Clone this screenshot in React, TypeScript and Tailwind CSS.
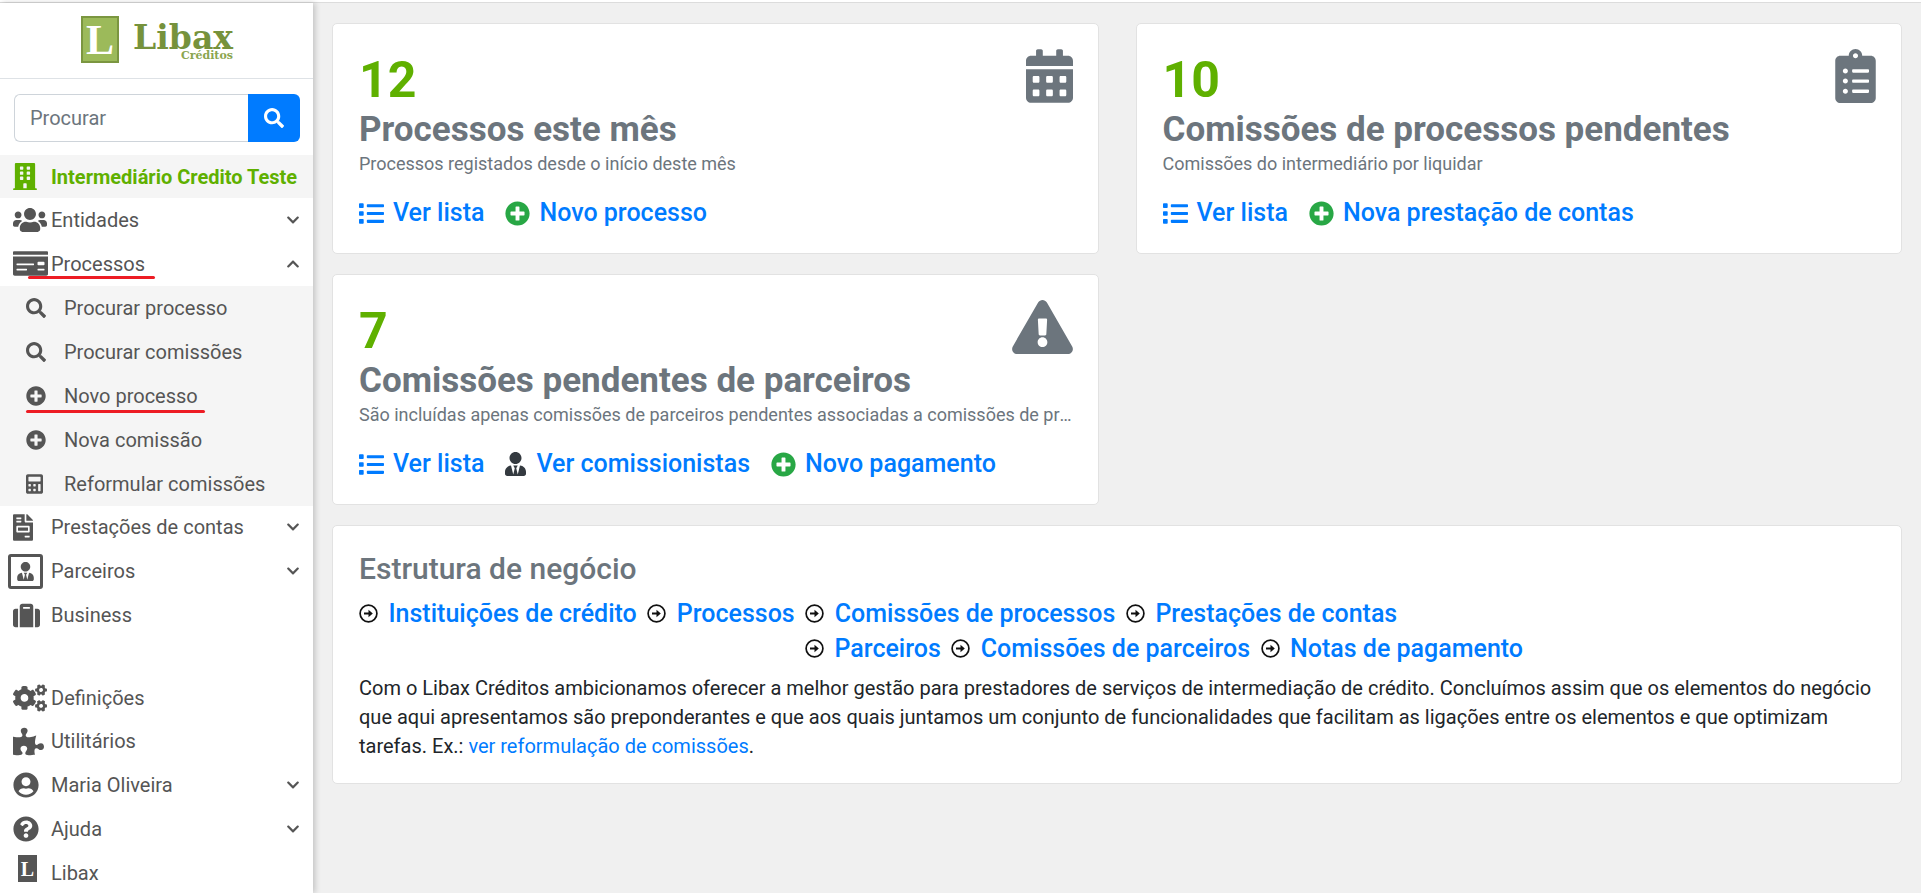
import React from "react";
import {
  FaBuilding, FaUsers, FaMoneyCheck, FaChevronDown, FaChevronUp, FaSearch, FaPlusCircle, FaCalculator,
  FaFileInvoice, FaUserTie, FaSuitcase, FaCogs, FaPuzzlePiece, FaUserCircle, FaQuestionCircle,
  FaCalendarAlt, FaClipboardList, FaExclamationTriangle, FaList,
} from "react-icons/fa";

function Row({ icon, label, chevron, up }: { icon: React.ReactNode; label: string; chevron?: boolean; up?: boolean }) {
  return (
    <div className="h-[43.8px] flex items-center pr-[13px] text-[#555] text-[20px] relative">
      <span className="w-[51px] shrink-0 flex items-center justify-start pl-[13px]">{icon}</span>
      <span className="flex-1">{label}</span>
      {chevron && (up ? <FaChevronUp className="text-[14px]" /> : <FaChevronDown className="text-[14px]" />)}
    </div>
  );
}

function SubRow({ icon, label }: { icon: React.ReactNode; label: string }) {
  return (
    <div className="h-[43.8px] flex items-center text-[#555] text-[20px]">
      <span className="w-[64px] shrink-0 pl-[26px] flex items-center">{icon}</span>
      <span>{label}</span>
    </div>
  );
}

function Sidebar() {
  return (
    <aside className="w-[313px] shrink-0 bg-white h-[890px] shadow-[2px_0_6px_rgba(0,0,0,0.2)] relative z-10 overflow-hidden">
      <div className="h-[76px] border-b border-[#dee2e6] flex items-center justify-center gap-[14px] pl-[1px]">
        <div className="w-[38px] h-[47px] -mt-[2px] bg-[#9cba5a] border-2 border-[#7b9640] flex items-center justify-center text-white text-[42px] font-bold leading-none font-['Liberation_Serif',serif]">
          L
        </div>
        <div className="flex flex-col items-end mt-[3px]">
          <span className="text-[#76923c] text-[33px] font-bold leading-[30px] font-['DejaVu_Serif',serif]">Libax</span>
          <span className="text-[#8aa54f] text-[11px] font-bold leading-[12px] font-['DejaVu_Serif',serif] -mt-[3px]">Créditos</span>
        </div>
      </div>
      <div className="flex h-[48px] ml-[14px] mr-[13px] mt-[15px] mb-[13px]">
        <div className="flex-1 border border-[#ced4da] border-r-0 rounded-l-[6px] flex items-center pl-[15px] text-[20px] text-[#6c757d]">Procurar</div>
        <div className="w-[52px] bg-[#007bff] rounded-r-[6px] flex items-center justify-center text-white">
          <FaSearch className="text-[20px]" />
        </div>
      </div>
      <div className="h-[43px] bg-[#f5f5f5] flex items-center text-[#5fb000] font-bold text-[20px]">
        <span className="w-[51px] pl-[13px] flex items-center"><FaBuilding className="w-[24px] h-[27px]" /></span>
        <span>Intermediário Credito Teste</span>
      </div>
      <Row icon={<FaUsers className="text-[34px]" />} label="Entidades" chevron />
      <Row icon={<FaMoneyCheck className="text-[35px]" />} label="Processos" chevron up />
      <div className="bg-[#f5f5f5] pt-[1px]">
        <SubRow icon={<FaSearch className="text-[20px]" />} label="Procurar processo" />
        <SubRow icon={<FaSearch className="text-[20px]" />} label="Procurar comissões" />
        <SubRow icon={<FaPlusCircle className="text-[20px]" />} label="Novo processo" />
        <SubRow icon={<FaPlusCircle className="text-[20px]" />} label="Nova comissão" />
        <SubRow icon={<FaCalculator className="w-[17px] h-[20px]" />} label="Reformular comissões" />
      </div>
      <Row icon={<FaFileInvoice className="w-[20px] h-[27px]" />} label="Prestações de contas" chevron />
      <Row
        icon={
          <span className="w-[35px] h-[35px] -ml-[5px] border-[3px] border-[#555] rounded-[3px] flex items-center justify-center">
            <FaUserTie className="text-[19px]" />
          </span>
        }
        label="Parceiros"
        chevron
      />
      <Row icon={<FaSuitcase className="text-[27px]" />} label="Business" />
      <div className="h-[38.7px]" />
      <Row icon={<FaCogs className="text-[34px]" />} label="Definições" />
      <Row icon={<FaPuzzlePiece className="text-[31px]" />} label="Utilitários" />
      <Row icon={<FaUserCircle className="text-[26px]" />} label="Maria Oliveira" chevron />
      <Row icon={<FaQuestionCircle className="text-[26px]" />} label="Ajuda" chevron />
      <Row
        icon={
          <span className="w-[19px] h-[27px] ml-[5px] -mt-[8px] bg-[#555] text-white text-[20px] font-bold flex items-center justify-center leading-none font-['Liberation_Serif',serif]">
            L
          </span>
        }
        label="Libax"
      />
      <div className="absolute left-[28px] top-[273px] w-[127px] h-[3px] bg-[#ed1c24] rounded-full" />
      <div className="absolute left-[26px] top-[407px] w-[179px] h-[3px] bg-[#ed1c24] rounded-full" />
    </aside>
  );
}

function Lnk({ icon, label }: { icon: React.ReactNode; label: string }) {
  return (
    <span className="flex items-center gap-[9px]">
      {icon}
      <span className="text-[#007bff] font-medium text-[25px] leading-[30px]">{label}</span>
    </span>
  );
}

const listIcon = <FaList className="text-[#007bff] text-[25px]" />;
const plusIcon = <FaPlusCircle className="text-[#28a745] text-[25px]" />;

function Card({ n, title, sub, icon, links }: { n: string; title: string; sub: string; icon: React.ReactNode; links: React.ReactNode }) {
  return (
    <div className="h-[231px] bg-white rounded-[5px] border border-[#e2e2e2] pl-[26px] pr-[25px] pt-[25px] min-w-0">
      <div className="flex justify-between h-[54px]">
        <span className="text-[#5fb000] font-bold text-[50px] leading-[54px] pt-[4px]">{n}</span>
        <span className="text-[#6c757d]">{icon}</span>
      </div>
      <div className="mt-[8px] text-[#6c757d] font-bold text-[35px] leading-[38px]">{title}</div>
      <div className="mt-[4px] text-[#6c757d] text-[18px] leading-[21px] truncate">{sub}</div>
      <div className="mt-[24px] flex items-center gap-[21px]">{links}</div>
    </div>
  );
}

function Arrow() {
  return (
    <svg width="19" height="19" viewBox="0 0 19 19" className="shrink-0">
      <circle cx="9.5" cy="9.5" r="8.4" fill="none" stroke="#111" strokeWidth="1.7" />
      <path d="M5 8.6h4.5V5.8l4.3 3.7-4.3 3.7v-2.8H5z" fill="#111" />
    </svg>
  );
}

function Chain({ label }: { label: string }) {
  return (
    <span className="flex items-center gap-[10.5px]">
      <Arrow />
      <span className="text-[#007bff] font-medium text-[25px] leading-[35px]">{label}</span>
    </span>
  );
}

export default function App() {
  return (
    <div className="font-['Roboto',sans-serif] w-[1921px] h-[893px] bg-white pt-[2px] overflow-hidden">
      <div className="h-[891px] bg-[#f0f0f0] border-t border-[#dcdcdc] flex">
        <Sidebar />
        <main className="flex-1 pl-[19px] pr-[19px] pt-[20px]">
          <div className="grid grid-cols-2 gap-x-[37px] gap-y-[20px]">
            <Card
              n="12"
              title="Processos este mês"
              sub="Processos registados desde o início deste mês"
              icon={<FaCalendarAlt className="w-[47px] h-[54px]" />}
              links={<><Lnk icon={listIcon} label="Ver lista" /><Lnk icon={plusIcon} label="Novo processo" /></>}
            />
            <Card
              n="10"
              title="Comissões de processos pendentes"
              sub="Comissões do intermediário por liquidar"
              icon={<FaClipboardList className="w-[41px] h-[54px]" />}
              links={<><Lnk icon={listIcon} label="Ver lista" /><Lnk icon={plusIcon} label="Nova prestação de contas" /></>}
            />
            <Card
              n="7"
              title="Comissões pendentes de parceiros"
              sub="São incluídas apenas comissões de parceiros pendentes associadas a comissões de processos"
              icon={<FaExclamationTriangle className="w-[61px] h-[54px]" />}
              links={<><Lnk icon={listIcon} label="Ver lista" /><Lnk icon={<FaUserTie className="text-[#343a40] w-[21px] h-[24px] mr-[1px]" />} label="Ver comissionistas" /><Lnk icon={plusIcon} label="Novo pagamento" /></>}
            />
            <div />
            <div className="col-span-2 h-[259px] bg-white rounded-[5px] border border-[#e2e2e2] pl-[26px] pr-[25px] pt-[25px]">
              <div className="text-[#6c757d] font-medium text-[30px] leading-[36px]">Estrutura de negócio</div>
              <div className="mt-[9px] flex gap-[10.5px]">
                <Chain label="Instituições de crédito" />
                <Chain label="Processos" />
                <Chain label="Comissões de processos" />
                <Chain label="Prestações de contas" />
              </div>
              <div className="ml-[446px] flex gap-[10.5px]">
                <Chain label="Parceiros" />
                <Chain label="Comissões de parceiros" />
                <Chain label="Notas de pagamento" />
              </div>
              <p className="mt-[8px] text-[#212529] text-[20px] leading-[28.8px]">
                Com o Libax Créditos ambicionamos oferecer a melhor gestão para prestadores de serviços de intermediação de crédito. Concluímos assim que os elementos do negócio que aqui apresentamos são preponderantes e que aos quais juntamos um conjunto de funcionalidades que facilitam as ligações entre os elementos e que optimizam tarefas. Ex.: <span className="text-[#007bff]">ver reformulação de comissões</span>.
              </p>
            </div>
          </div>
        </main>
      </div>
    </div>
  );
}
